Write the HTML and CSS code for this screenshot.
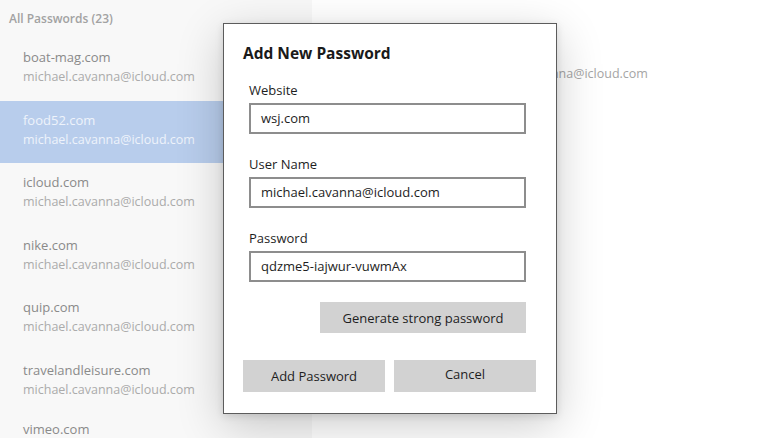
FILE: index.html
```html
<!DOCTYPE html>
<html lang="en">
<head>
  <meta charset="UTF-8" />
  <meta name="viewport" content="width=device-width, initial-scale=1.0"/>
  <title>Passwords</title>
  <link rel="stylesheet" href="styles.css">
</head>
<body>
  <div class="app">
    <div class="list">
      <div class="list-head">All Passwords (23)</div>
      <div class="row">
        <div class="site">boat-mag.com</div>
        <div class="user">michael.cavanna@icloud.com</div>
      </div>
      <div class="row selected">
        <div class="site">food52.com</div>
        <div class="user">michael.cavanna@icloud.com</div>
      </div>
      <div class="row">
        <div class="site">icloud.com</div>
        <div class="user">michael.cavanna@icloud.com</div>
      </div>
      <div class="row">
        <div class="site">nike.com</div>
        <div class="user">michael.cavanna@icloud.com</div>
      </div>
      <div class="row">
        <div class="site">quip.com</div>
        <div class="user">michael.cavanna@icloud.com</div>
      </div>
      <div class="row">
        <div class="site">travelandleisure.com</div>
        <div class="user">michael.cavanna@icloud.com</div>
      </div>
      <div class="row last">
        <div class="site">vimeo.com</div>
      </div>
    </div>
    <div class="detail">
      <div class="detail-user">michael.cavanna@icloud.com</div>
    </div>
  </div>

  <div class="dialog">
    <h2>Add New Password</h2>
    <div class="field">
      <label>Website</label>
      <div class="input">wsj.com</div>
    </div>
    <div class="field">
      <label>User Name</label>
      <div class="input">michael.cavanna@icloud.com</div>
    </div>
    <div class="field">
      <label>Password</label>
      <div class="input">qdzme5-iajwur-vuwmAx</div>
    </div>
    <div class="gen-row">
      <button class="btn gen">Generate strong password</button>
    </div>
    <div class="actions">
      <button class="btn">Add Password</button>
      <button class="btn cancel">Cancel</button>
    </div>
  </div>
</body>
</html>
```

FILE: styles.css
```css
* {
  box-sizing: border-box;
}

body {
  margin: 0;
  font-family: "Open Sans", "Noto Sans", sans-serif;
  background: #fff;
  width: 780px;
  height: 438px;
  overflow: hidden;
  position: relative;
}

.app {
  display: flex;
  height: 100%;
}

.list {
  width: 312px;
  background: #f8f8f8;
  flex-shrink: 0;
}

.list-head {
  padding: 9px 0 10px 9px;
  line-height: 19px;
  font-size: 12px;
  font-weight: 600;
  color: #a2a2a2;
}

.row {
  height: 62.5px;
  padding: 10px 0 0 23px;
  line-height: 19px;
}

.row.last {
  height: auto;
  padding-top: 8px;
  line-height: 17px;
}

.row .site {
  font-size: 13px;
  color: #8a8a8a;
}

.row .user {
  font-size: 12.5px;
  color: #ababab;
}

.row.selected {
  background: #b8cdec;
}

.row.selected .site,
.row.selected .user {
  color: #eef3fb;
}

.detail {
  flex: 1;
  padding: 64px 0 0 164px;
}

.detail-user {
  font-size: 12.5px;
  line-height: 19px;
  color: #a5a5a5;
}

/* dialog sits over the list */
.dialog {
  position: absolute;
  left: 223px;
  top: 23px;
  width: 334px;
  height: 391px;
  background: #fff;
  border: 1px solid #5c5c5c;
  padding: 18px 20px 0 19px;
  box-shadow: 0 12px 44px rgba(0, 0, 0, 0.2), 0 2px 8px rgba(0, 0, 0, 0.12);
}

.dialog h2 {
  margin: 0 0 17px;
  font-size: 15.5px;
  line-height: 22px;
  font-weight: 700;
  color: #1a1a1a;
}

.field {
  margin-left: 6px;
  width: 277px;
}

.field + .field {
  margin-top: 21px;
}

.field label {
  display: block;
  font-size: 13px;
  line-height: 19px;
  color: #1e1e1e;
  margin-bottom: 3px;
}

.input {
  height: 31px;
  border: 2px solid #8d8d8d;
  padding: 0 10px;
  font-size: 13px;
  line-height: 27px;
  color: #1e1e1e;
}

.gen-row {
  display: flex;
  justify-content: flex-end;
  width: 283px;
  margin-top: 20px;
}

.btn {
  font-family: inherit;
  font-size: 13px;
  color: #1e1e1e;
  background: #d2d2d2;
  border: none;
  height: 32px;
  padding: 0;
}

.gen {
  width: 206px;
  height: 31px;
}

.actions {
  display: flex;
  gap: 9px;
  margin-top: 27px;
}

.actions .btn {
  width: 142px;
}

.actions .cancel {
  padding-bottom: 4px;
}
```
